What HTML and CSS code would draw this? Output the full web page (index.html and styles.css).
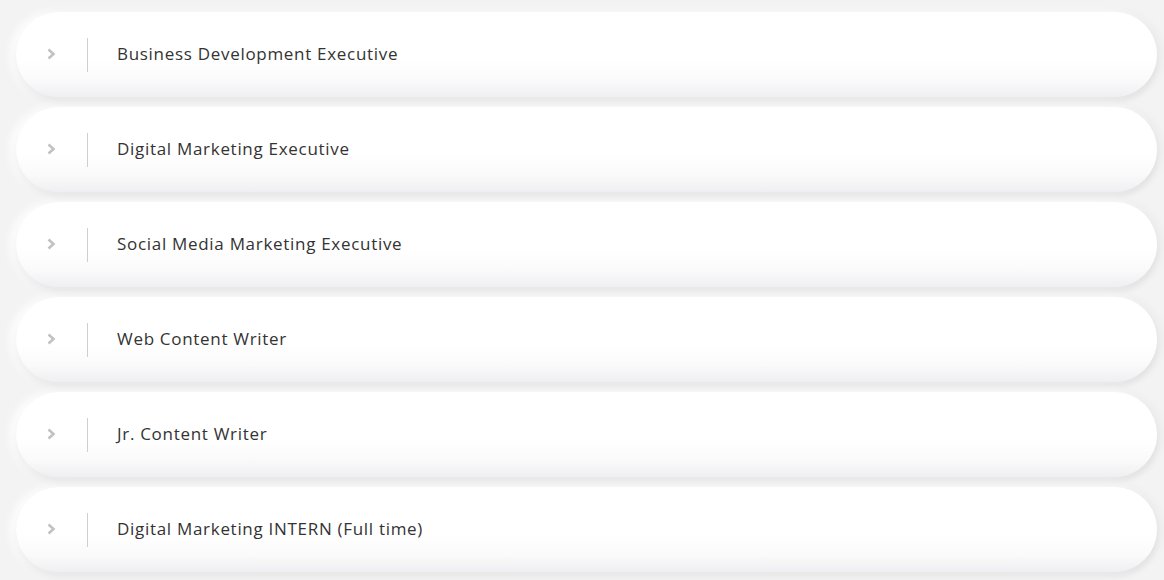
FILE: index.html
```html
<!DOCTYPE html>
<html>
<head>
<meta charset="utf-8">
<link rel="stylesheet" href="styles.css">
</head>
<body>
<div class="list">
  <div class="item"><span class="chev"><svg width="9" height="12" viewBox="0 0 9 12"><path d="M1.5 1.5 L6.5 6 L1.5 10.5" fill="none" stroke="#c2c2c2" stroke-width="2.6"/></svg></span><span class="sep"></span><span class="title">Business Development Executive</span></div>
  <div class="item"><span class="chev"><svg width="9" height="12" viewBox="0 0 9 12"><path d="M1.5 1.5 L6.5 6 L1.5 10.5" fill="none" stroke="#c2c2c2" stroke-width="2.6"/></svg></span><span class="sep"></span><span class="title">Digital Marketing Executive</span></div>
  <div class="item"><span class="chev"><svg width="9" height="12" viewBox="0 0 9 12"><path d="M1.5 1.5 L6.5 6 L1.5 10.5" fill="none" stroke="#c2c2c2" stroke-width="2.6"/></svg></span><span class="sep"></span><span class="title">Social Media Marketing Executive</span></div>
  <div class="item"><span class="chev"><svg width="9" height="12" viewBox="0 0 9 12"><path d="M1.5 1.5 L6.5 6 L1.5 10.5" fill="none" stroke="#c2c2c2" stroke-width="2.6"/></svg></span><span class="sep"></span><span class="title">Web Content Writer</span></div>
  <div class="item"><span class="chev"><svg width="9" height="12" viewBox="0 0 9 12"><path d="M1.5 1.5 L6.5 6 L1.5 10.5" fill="none" stroke="#c2c2c2" stroke-width="2.6"/></svg></span><span class="sep"></span><span class="title">Jr. Content Writer</span></div>
  <div class="item"><span class="chev"><svg width="9" height="12" viewBox="0 0 9 12"><path d="M1.5 1.5 L6.5 6 L1.5 10.5" fill="none" stroke="#c2c2c2" stroke-width="2.6"/></svg></span><span class="sep"></span><span class="title">Digital Marketing INTERN (Full time)</span></div>
</div>
</body>
</html>
```
FILE: styles.css
```css
html, body {
  margin: 0;
  padding: 0;
  background: #f3f3f4;
  height: 100%;
  overflow: hidden;
}
.list {
  display: flex;
  flex-direction: column;
  gap: 10px;
  padding: 12px 7px 0 16px;
}
.item {
  height: 85px;
  border-radius: 44px;
  background: linear-gradient(180deg, #ffffff 0%, #ffffff 55%, #fafafb 80%, #efeff1 100%);
  box-shadow: 0 5px 6px rgba(0,0,0,0.06), -6px 0 10px rgba(255,255,255,0.9), 6px 0 10px rgba(0,0,0,0.03);
  display: flex;
  align-items: center;
  padding-left: 31px;
}
.chev {
  width: 9px;
  height: 12px;
  display: flex;
  margin-bottom: 2px;
}
.sep {
  width: 1px;
  height: 34px;
  background: #cfcfcf;
  margin-left: 31px;
}
.title {
  margin-left: 29px;
  padding-bottom: 2px;
  font-family: "Open Sans", sans-serif;
  font-size: 17px;
  letter-spacing: 0.7px;
  color: #333;
}
```
